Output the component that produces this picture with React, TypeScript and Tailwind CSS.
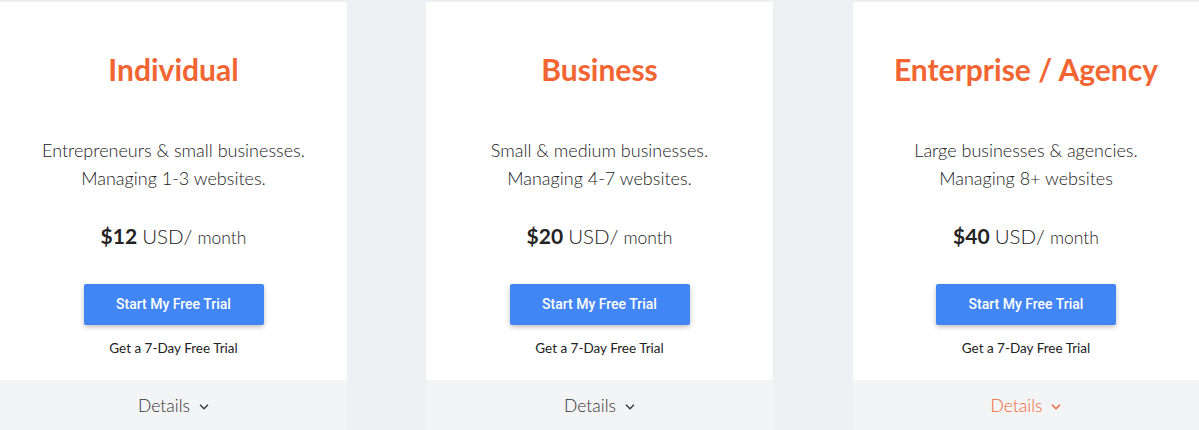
import React from "react";

type Plan = { title: string; l1: string; l2: string; price: string; active?: boolean; cls: string };

const plans: Plan[] = [
  { title: "Individual", l1: "Entrepreneurs & small businesses.", l2: "Managing 1-3 websites.", price: "$12", cls: "w-[347px]" },
  { title: "Business", l1: "Small & medium businesses.", l2: "Managing 4-7 websites.", price: "$20", cls: "ml-[79px] w-[347px]" },
  { title: "Enterprise / Agency", l1: "Large businesses & agencies.", l2: "Managing 8+ websites", price: "$40", active: true, cls: "ml-[80px] w-[346px]" },
];

function Chevron({ className }: { className?: string }) {
  return (
    <svg width="10" height="6" viewBox="0 0 10 6" className={className} fill="none" stroke="currentColor" strokeWidth="1.3">
      <path d="M1 0.8 L5 4.8 L9 0.8" />
    </svg>
  );
}

function Card({ p }: { p: Plan }) {
  return (
    <div className={"flex shrink-0 flex-col bg-white " + p.cls}>
      <div className="flex h-[378px] flex-col items-center">
        <h2 className="mt-[47px] text-[30px] font-bold leading-[40px] text-[#f26532] [font-family:Lato,sans-serif]">{p.title}</h2>
        <div className="mt-[47px] text-center text-[18px] font-light leading-[28px] text-[#222] [font-family:Lato,sans-serif]">
          <div>{p.l1}</div>
          <div>{p.l2}</div>
        </div>
        <div className="mt-[28px] flex items-baseline text-[#222] [font-family:Lato,sans-serif]">
          <span className="text-[21px] font-bold">{p.price}</span>
          <span className="ml-[5px] text-[20.5px] font-light">USD/</span>
          <span className="ml-[5px] text-[17.5px] font-light">month</span>
        </div>
        <button className="mt-[32px] h-[41px] w-[180px] rounded-[2px] bg-[#4285f4] text-[14px] font-medium text-white shadow-[0_2px_5px_rgba(0,0,0,0.25)] [font-family:Roboto,sans-serif]">
          Start My Free Trial
        </button>
        <div className="mt-[13px] text-[13.5px] font-normal text-[#222] [font-family:Lato,sans-serif]">Get a 7-Day Free Trial</div>
      </div>
      <div className="flex h-[50px] items-center justify-center bg-[#f3f4f6] pt-[3px]">
        <span
          className={
            "flex items-center gap-[9px] text-[17.5px] font-light [font-family:Lato,sans-serif] " +
            (p.active ? "text-[#f26532]" : "text-[#333]")
          }
        >
          Details
          <Chevron className="mt-[1px]" />
        </span>
      </div>
    </div>
  );
}

export default function App() {
  return (
    <div className="h-[430px] w-[1199px] overflow-hidden bg-[#eff0f3] pt-[2px]">
      <div className="flex h-full">
        {plans.map((p) => (
          <Card key={p.title} p={p} />
        ))}
      </div>
    </div>
  );
}
